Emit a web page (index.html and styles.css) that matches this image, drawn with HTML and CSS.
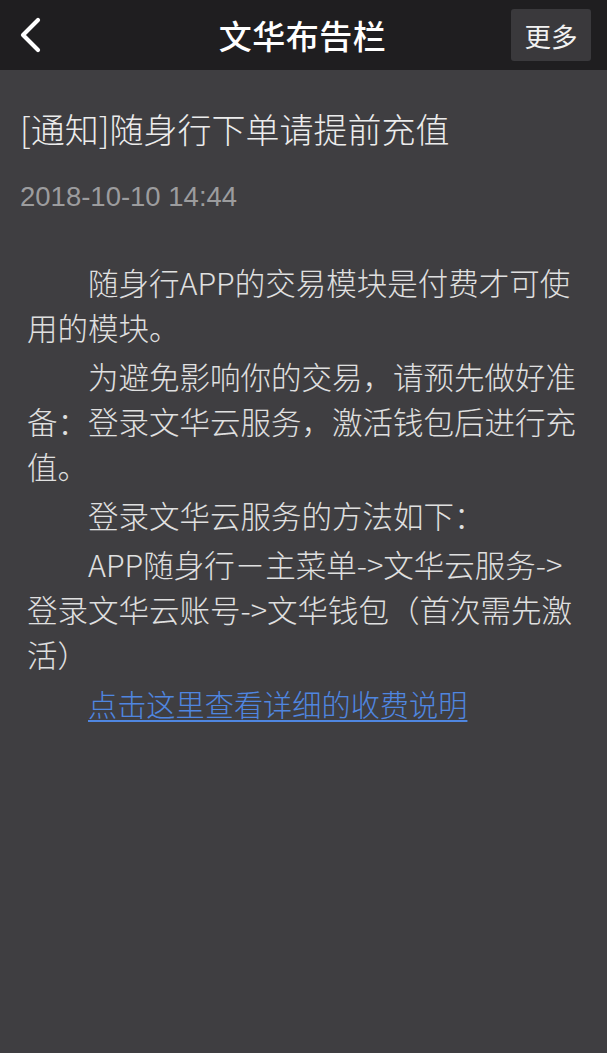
FILE: index.html
```html
<!DOCTYPE html>
<html lang="zh-CN">
<head>
<meta charset="utf-8">
<title>文华布告栏</title>
<link rel="stylesheet" href="styles.css">
</head>
<body>
<header class="navbar">
  <div class="nav-left">
    <svg class="back" width="24" height="36" viewBox="0 0 24 36" aria-hidden="true">
      <polyline points="19,3 4,18 19,33" fill="none" stroke="#ffffff" stroke-width="4.2" stroke-linecap="round" stroke-linejoin="round"/>
    </svg>
  </div>
  <h1 class="nav-title">文华布告栏</h1>
  <div class="nav-right">
    <span class="more-btn">更多</span>
  </div>
</header>
<main class="article">
  <h2 class="article-title">[通知]随身行下单请提前充值</h2>
  <div class="article-date">2018-10-10 14:44</div>
  <div class="article-body">
    <p>随身行APP的交易模块是付费才可使用的模块。</p>
    <p>为避免影响你的交易，请预先做好准备：登录文华云服务，激活钱包后进行充值。</p>
    <p>登录文华云服务的方法如下：</p>
    <p>APP随身行－主菜单-&gt;文华云服务-&gt;登录文华云账号-&gt;文华钱包（首次需先激活）</p>
    <p><a class="link" href="#">点击这里查看详细的收费说明</a></p>
  </div>
</main>
</body>
</html>
```

FILE: styles.css
```css
html, body {
  margin: 0;
  padding: 0;
}
body {
  background: #3f3e41;
  min-height: 1053px;
  font-family: "Noto Sans CJK SC", "Noto Sans", sans-serif;
  color: #e0e0e0;
}
.navbar {
  height: 70px;
  background: #1f1e20;
  display: grid;
  grid-template-columns: 1fr auto 1fr;
  align-items: center;
}
.nav-left {
  display: flex;
  align-items: center;
  padding-left: 19px;
}
.back {
  display: block;
}
.nav-title {
  margin: 0 0 0 -2px;
  font-size: 33px;
  font-weight: 500;
  color: #ffffff;
  line-height: 40px;
  letter-spacing: 0.5px;
}
.nav-right {
  display: flex;
  justify-content: flex-end;
  padding-right: 16px;
}
.more-btn {
  width: 80px;
  height: 52px;
  background: #3a393c;
  border-radius: 3px;
  display: flex;
  align-items: center;
  justify-content: center;
  font-size: 26.5px;
  color: #f2f2f2;
}
.article {
  padding: 37px 0 0 0;
}
.article-title {
  margin: 0;
  padding: 0 20px;
  font-size: 34px;
  font-weight: 300;
  line-height: 44px;
  color: #ececec;
}
.article-date {
  margin-top: 31px;
  padding: 0 20px;
  font-family: "Liberation Sans", Arial, sans-serif;
  font-size: 27.5px;
  line-height: 30px;
  color: #9c9c9e;
}
.article-body {
  margin-top: 48px;
  padding: 0 26px 0 27px;
  font-size: 30.5px;
  font-weight: 300;
  line-height: 45px;
}
.article-body p {
  margin: 0 0 4px 0;
  text-indent: 2em;
}
.link {
  font-size: 29.2px;
  color: #4f86e0;
  text-decoration: underline;
  text-underline-offset: 4px;
  text-decoration-thickness: 2px;
}
```
